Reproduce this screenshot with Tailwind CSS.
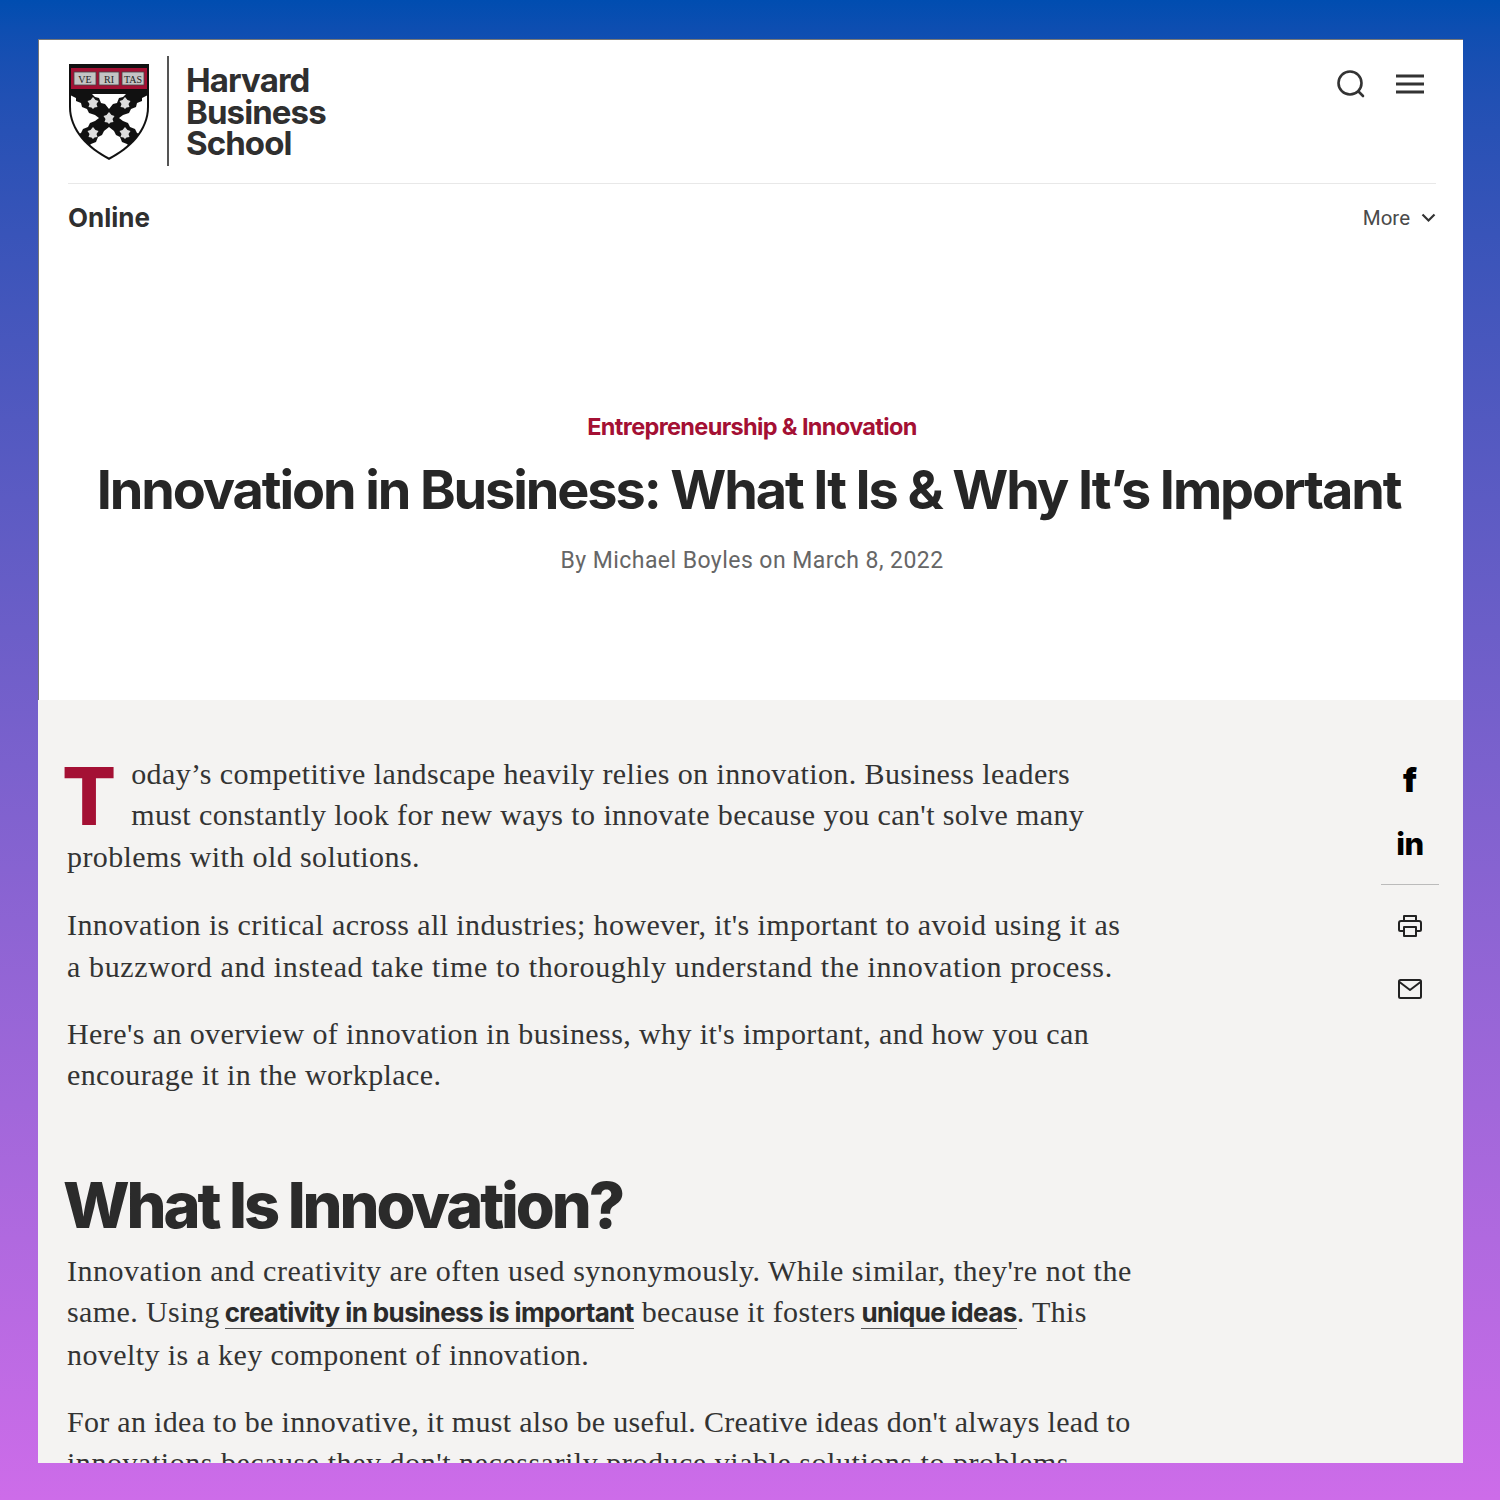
<!DOCTYPE html>
<html lang="en">
<head>
  <meta charset="UTF-8" />
  <title>Innovation in Business</title>
  <script src="https://cdn.jsdelivr.net/npm/@tailwindcss/browser@4"></script>
</head>
<body class="m-0">
  <div class="h-[1500px] w-[1500px] bg-linear-to-b from-[#004db0] to-[#cd6ce9] pt-[39px] pl-[38px] pr-[37px] pb-[37px]">
    <div class="h-[1424px] overflow-hidden bg-white font-['Inter',sans-serif] text-[#2b2b2b]">

      <!-- header -->
      <header class="h-[661px] border-l border-t border-[#777] bg-white pl-[29px] pr-[27px]">
        <div class="flex h-[144px] items-start justify-between border-b border-[#e8e8e8]">
          <div class="flex items-start pt-[16px]">
            <svg class="mt-[7px] h-[98px] w-[82px]" viewBox="0 0 82 98">
              <defs><clipPath id="shieldInner"><path d="M3 3H79V44C79 67 61 84 41 94.500C21 84 3 67 3 44Z"/></clipPath></defs>
              <path d="M1 1H81V44C81 68 62 86 41 97C20 86 1 68 1 44Z" fill="#111"/>
              <rect x="3" y="5" width="76" height="21" fill="#a41034"/>
              <rect x="6" y="9" width="22" height="13" fill="#c4c4c4" stroke="#444" stroke-width="0.8"/>
              <rect x="31" y="9" width="20" height="13" fill="#c4c4c4" stroke="#444" stroke-width="0.8"/>
              <rect x="54" y="9" width="22" height="13" fill="#c4c4c4" stroke="#444" stroke-width="0.8"/>
              <text x="17" y="19.500" text-anchor="middle" font-size="10" font-family="Liberation Serif" fill="#222">VE</text>
              <text x="41" y="19.500" text-anchor="middle" font-size="10" font-family="Liberation Serif" fill="#222">RI</text>
              <text x="65" y="19.500" text-anchor="middle" font-size="10" font-family="Liberation Serif" fill="#222">TAS</text>
              <g clip-path="url(#shieldInner)" fill="#fff">
                <path d="M24 31H58L55 34L51 35L49 40L45 41L41 46L37 41L33 40L31 35L27 34Z"/>
                <path d="M0 31L8 35V38L13 40L14 44L19 46L21 50L27 52L31 55L27 58L22 60L20 64L15 66L13 70L8 72L0 72Z"/>
                <path d="M82 31L74 35V38L69 40L68 44L63 46L61 50L55 52L51 55L55 58L60 60L62 64L67 66L69 70L74 72L82 72Z"/>
                <path d="M41 64L46 68L48 72L52 74L54 79L59 81L64 86L41 98L18 86L23 81L28 79L30 74L34 72L36 68Z"/>
              </g>
              <g fill="#ddd">
                <path d="M25 34l2.500 3 3 1-2 3 1 3-3 .5-1.500 1.500-1.500-1.500-3-.5 1-3-2-3 3-1z"/>
                <path d="M57 34l2.500 3 3 1-2 3 1 3-3 .5-1.500 1.500-1.500-1.500-3-.5 1-3-2-3 3-1z"/>
                <path d="M41 49l2.500 3 3 1-2 3 1 3-3 .5-1.500 1.500-1.500-1.500-3-.5 1-3-2-3 3-1z"/>
                <path d="M25 64l2.500 3 3 1-2 3 1 3-3 .5-1.500 1.500-1.500-1.500-3-.5 1-3-2-3 3-1z"/>
                <path d="M57 64l2.500 3 3 1-2 3 1 3-3 .5-1.500 1.500-1.500-1.500-3-.5 1-3-2-3 3-1z"/>
              </g>
            </svg>
            <div class="ml-[17px] h-[110px] w-[2px] bg-[#555]"></div>
            <div class="ml-[17px] mt-[9px] text-[33px] leading-[31.5px] font-bold tracking-[-0.9px] text-[#2f2f2f]">Harvard<br />Business<br />School</div>
          </div>
          <div class="mr-[11px] flex items-center gap-[29px] pt-[29px]">
            <svg class="h-[30px] w-[30px]" viewBox="0 0 30 30" fill="none" stroke="#333" stroke-width="2.6" stroke-linecap="round"><circle cx="14" cy="14" r="11.5"/><path d="M22.5 22.5L27 27"/></svg>
            <svg class="h-[20px] w-[30px]" viewBox="0 0 30 20" fill="none" stroke="#333" stroke-width="2.8"><path d="M1 2H29M1 10H29M1 18H29"/></svg>
          </div>
        </div>
        <div class="flex h-[68px] items-center justify-between">
          <span class="-mt-[1px] text-[26px] font-bold tracking-[0px] text-[#2f2f2f]">Online</span>
          <span class="flex items-center gap-[11px] font-['Roboto',sans-serif] text-[20.5px] text-[#4a4a4a]">More
            <svg class="h-[10px] w-[15px]" viewBox="0 0 15 10" fill="none" stroke="#333" stroke-width="2.2"><path d="M1.5 1.5L7.5 7.5L13.5 1.5"/></svg>
          </span>
        </div>
        <div class="pt-[160px] text-center">
          <p class="text-[23.5px] leading-[30px] font-bold tracking-[-0.65px] text-[#a41034]">Entrepreneurship &amp; Innovation</p>
          <h1 class="mt-[16px] ml-[-7px] text-[54px] leading-[64px] font-bold tracking-[-2.1px] whitespace-nowrap text-[#262626]">Innovation in Business: What It Is &amp; Why It’s Important</h1>
          <p class="mt-[24px] font-['Roboto',sans-serif] text-[23px] leading-[30px] tracking-[0.45px] text-[#666]">By Michael Boyles on March 8, 2022</p>
        </div>
      </header>

      <!-- article -->
      <section class="flex h-[763px] bg-[#f4f3f2]">
        <article class="w-[1100px] shrink-0 pl-[29px] pt-[53px] font-['Liberation_Serif',serif] text-[30px] leading-[41.4px] tracking-[0.4px] text-[#333]">
          <p class="mb-[27px] w-[1068px]">
            <span class="float-left mt-[11px] mr-[15px] ml-[-5px] h-[64px] font-['Inter',sans-serif] text-[80px] leading-[64px] font-extrabold tracking-normal text-[#a41034]">T</span>
            oday’s competitive landscape heavily relies on innovation. Business leaders must constantly look for new ways to innovate because you can't solve many problems with old solutions.
          </p>
          <p class="mb-[26px] w-[1068px]">Innovation is critical across all industries; however, it's important to avoid using it as <span class="tracking-[0.63px]">a buzzword and instead take time to thoroughly understand the innovation process.</span></p>
          <p class="w-[1068px]">Here's an overview of innovation in business, why it's important, and how you can encourage it in the workplace.</p>
          <h2 class="mt-[71px] mb-[7px] ml-[-4px] font-['Inter',sans-serif] text-[63px] leading-[76px] font-extrabold tracking-[-3.1px] text-[#2b2b2b]">What Is Innovation?</h2>
          <p class="mb-[26px] w-[1068px]"><span class="tracking-[0.52px]">Innovation and creativity are often used synonymously. While similar, they're not the</span> same. Using <a class="ml-[-3px] border-b border-[#555] font-['Inter',sans-serif] text-[26px] font-bold tracking-[-0.6px] text-[#2b2b2b]">creativity in business is important</a> because it fosters <a class="ml-[-2px] border-b border-[#555] font-['Inter',sans-serif] text-[26px] font-bold tracking-[-0.6px] text-[#2b2b2b]">unique ideas</a>. This novelty is a key component of innovation.</p>
          <p class="w-[1068px] tracking-[0.3px]">For an idea to be innovative, it must also be useful. Creative ideas don't always lead to <span class="tracking-[0.54px]">innovations because they don't necessarily produce viable solutions to problems.</span></p>
        </article>
        <aside class="ml-[243px] flex w-[58px] shrink-0 flex-col items-center pt-[60px] text-black">
          <span class="h-[40px] font-['Inter',sans-serif] text-[33px] leading-[40px] font-black">f</span>
          <span class="mt-[24px] h-[40px] font-['Inter',sans-serif] text-[31px] leading-[40px] font-extrabold tracking-[-0.5px]">in</span>
          <div class="mt-[20px] h-px w-[58px] bg-[#bbb]"></div>
          <svg class="mt-[29px] h-[24px] w-[24px]" viewBox="0 0 24 24" fill="none" stroke="#222" stroke-width="2" stroke-linejoin="round"><path d="M6 7V2h12v5"/><path d="M6 17H2.5A1.5 1.5 0 0 1 1 15.500V9a2 2 0 0 1 2-2h18a2 2 0 0 1 2 2v6.500a1.500 1.500 0 0 1-1.500 1.500H18"/><path d="M6 13h12v9H6z"/></svg>
          <svg class="mt-[41px] h-[20px] w-[24px]" viewBox="0 0 24 20" fill="none" stroke="#222" stroke-width="2" stroke-linejoin="round"><rect x="1" y="1" width="22" height="18" rx="1.500"/><path d="M1.500 3L12 11L22.500 3"/></svg>
        </aside>
      </section>
    </div>
  </div>
</body>
</html>
